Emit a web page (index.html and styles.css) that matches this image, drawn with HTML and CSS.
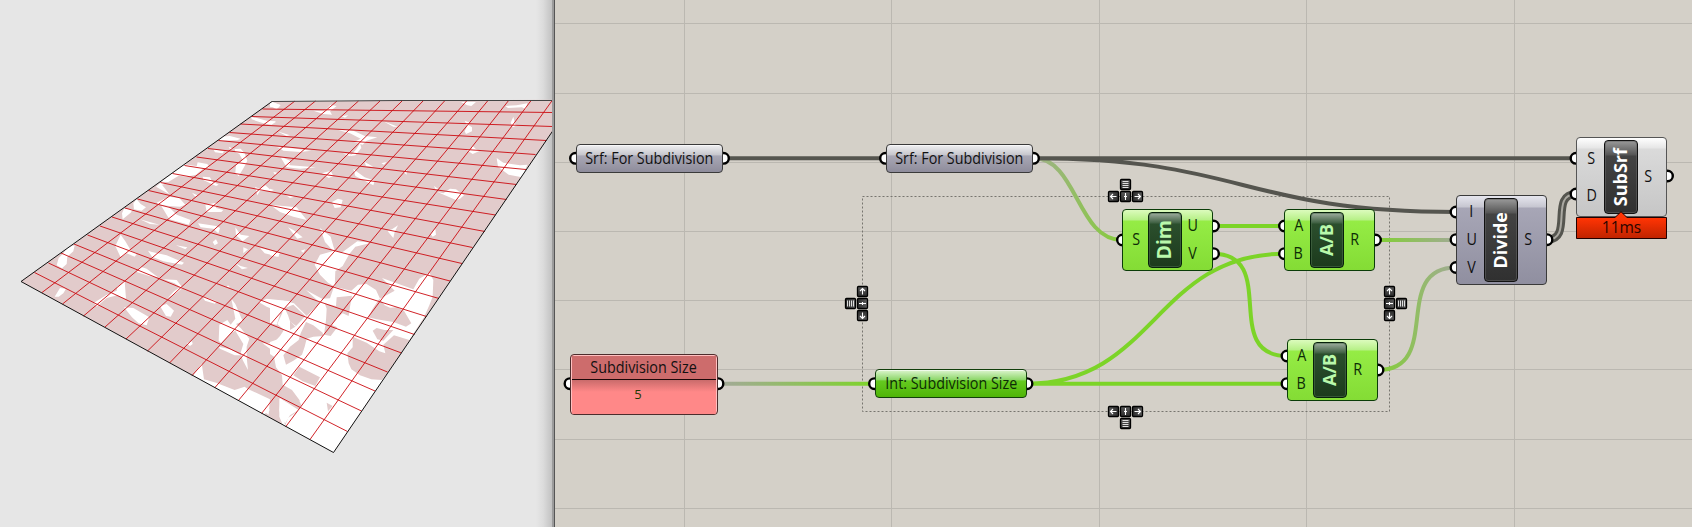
FILE: index.html
```html
<!DOCTYPE html>
<html lang="en">
<head>
<meta charset="utf-8">
<title>Surface subdivision</title>
<link rel="stylesheet" href="styles.css">
</head>
<body>
<main class="workspace">
  <section class="viewport">
    <svg class="mesh" width="552" height="527" viewBox="0 0 552 527">
      <defs><clipPath id="surface"><path d="M21 281.5L272 101.5L552 99.7L574 99.7L333.500 452.500Z"/></clipPath></defs>
      <path class="mesh-fill" d="M21 281.5L272 101.500L574 99.700L333.500 452.500Z"/>
      <g clip-path="url(#surface)">
        <g class="patches" transform="translate(0 80) scale(.33333)">
          <path d="M754 110L800 122L828 124L815 134L790 130L755 118ZM655 170L690 168L722 176L712 181L660 182ZM640 208L672 214L668 220L645 217ZM686 200L700 206L690 208ZM704 207L722 206L734 220L742 242L732 262L716 289L706 278L708 255L728 240L718 222L706 216ZM593 247L622 252L628 262L608 266L590 258ZM552 253L614 262L588 284L560 290L536 287L505 306L484 305L518 279ZM484 306L495 312L486 314L508 343L468 320ZM608 290L630 292L636 304L656 314L648 318L610 300ZM765 320L778 326L796 316L816 334L780 332L772 346ZM576 338L592 346L586 350ZM506 350L538 354L556 374L540 380L508 378L474 374L470 368ZM484 378L506 380L530 404L572 420L566 434L508 418ZM410 358L422 372L438 382L425 392L402 388L400 370ZM372 386L398 388L392 398L368 418L366 400ZM616 374L650 368L648 384L670 390L664 396L620 396ZM594 430L648 438L660 444L655 460L640 446L602 442ZM706 442L722 464L748 468L728 484L708 466ZM420 418L478 434L450 432ZM362 464L376 484L394 514L412 520L404 530L380 520L362 532L346 498ZM528 496L562 502L556 508ZM638 486L648 478L654 490L644 496ZM444 512L456 516L500 526L552 548L546 554L490 544L456 530ZM204 502L224 496L220 514L202 530L200 552L186 565L170 556L176 534L190 520ZM180 624L198 626L190 640L176 650L164 650ZM422 560L440 566L474 592L448 588L410 576ZM490 598L530 600L548 624L528 640L500 656L498 660L522 634L540 622L524 610ZM374 604L378 656L352 646L320 654L290 680L282 668L318 646L350 632L352 620ZM372 682L400 684L448 712L440 736L416 730L396 712ZM480 678L500 672L522 692L512 710L498 708ZM730 502L744 508L730 520ZM706 550L722 558L744 564L726 568ZM780 504L838 518L836 530L794 520ZM684 616L690 622L680 622ZM606 648L650 664L645 671L615 662ZM828 202L870 206V213ZM846 232L870 242V252L860 250ZM820 276L832 278L826 286ZM808 68L818 66L842 76L830 88L822 84ZM560 790L576 784L578 792L570 798Z"/>
          <path d="M694 656L706 672L718 700L728 724L708 732L722 744L748 776L740 800L740 832L744 870L728 840L722 818L730 792L706 752L694 758L664 790L656 782L658 734L682 720L692 734L706 716L702 696ZM656 800L690 808L724 826L704 826L660 806ZM776 666L800 656L870 664V690L854 700L830 692L800 680ZM850 692L870 690V888L846 868L828 846L820 814L788 790L820 790L840 768L852 750L832 732ZM605 850L612 898L648 908L704 930L734 920L760 940L810 990L790 1005L700 955L580 886ZM810 958L806 1004L770 980L730 944L742 926Z"/>
        </g>
        <g class="patches" transform="translate(270 80) scale(.33333)">
          <path d="M0 66L30 74L24 84L0 80ZM130 92L162 94L182 74L200 78L180 94L186 104L160 102ZM215 108L235 106L225 113ZM0 124L18 128L0 132ZM22 154L60 166L50 168ZM205 150L250 152L285 168L322 172L290 182L278 194L252 186L272 176L240 160ZM340 124L384 140L370 140ZM24 202L60 204L124 212L90 216L40 212ZM270 190L274 204L256 226L242 228L260 206ZM32 232L46 238L60 256L138 262L90 266L50 262L44 252ZM218 220L250 224L238 228ZM156 280L182 272L190 288L176 294ZM250 266L262 276L284 292L314 302L310 316L256 288ZM284 246L310 260L288 258ZM334 250L350 246L342 254ZM400 276L410 268L410 284ZM186 366L204 356L218 360L212 382L194 384ZM48 346L74 350L60 354ZM0 374L80 382L110 420L70 410L30 396ZM54 442L70 450L98 472L82 476ZM92 512L106 508L100 518ZM0 514L30 520L22 530L0 526ZM352 452L366 448L384 436L374 456L370 474L358 460ZM482 462L496 446L498 464L488 470ZM573 66L618 66L604 78L592 76ZM706 78L740 76L772 70L768 88L756 82L714 84ZM584 122L600 128L594 134L606 142L606 154L588 162L584 154L592 138ZM722 128L730 110L736 134L742 136L728 142ZM590 210L604 206L608 198L618 208L630 212L608 222ZM680 234L700 248L750 256L772 254L756 292L716 284L684 260ZM492 318L506 328L496 328ZM502 336L520 340L540 326L558 328L582 346L570 356L558 360L530 348ZM0 326L12 330L0 336Z"/>
        </g>
        <g class="patches" transform="translate(270 230) scale(.33333)">
          <path d="M150 -6L182 20L194 62L215 68L262 34L304 38L256 50L238 72L218 108L196 124L194 170L174 158L150 134L134 104L150 74L190 63L165 36ZM0 212L40 212L72 220L96 244L110 258L76 290L60 272L46 240L36 236L20 284L0 280V232L30 230Z"/>
          <path d="M108 180L156 206L180 205L192 170L244 182L264 164L290 162L318 180L330 206L374 182L336 144L430 178L448 146L478 128L490 150L488 200L478 226L462 262L360 420L190 668L40 588L28 560L28 505L60 514L90 512L66 480L38 464L36 436L18 412L12 380L0 372V336L28 326L60 300L76 290L110 258L150 218Z"/>
        </g>
        <g class="mesh-fill" transform="translate(270 230) scale(.33333)">
          <path d="M200 202L246 197L240 230L236 258L218 250L204 262L184 284L202 292L182 318L162 314L168 270L170 236L164 220L198 228ZM328 206L344 226L360 233L380 232L402 242L424 280L408 290L370 276L320 268L294 262L308 236ZM308 302L320 294L344 300L370 300L340 332L322 328ZM248 320L290 338L328 364L346 370L340 344L372 316L418 330L398 374L335 450L304 448L270 436L244 418L236 400L232 370L248 352ZM88 410L150 442L136 468L98 454L70 436ZM108 276L130 286L158 308L160 318L130 320L110 326L104 350L96 374L70 392L48 404L40 376L60 350L86 330L92 310ZM44 234L70 224L106 258L78 288L60 274L54 256ZM170 518L188 528L174 544ZM34 470L60 490L88 512L94 526L80 546L54 564L46 586L36 560Z"/>
        </g>
        <path class="patches" transform="translate(270 230) scale(.33333)" d="M32 506L52 518L86 540L60 556L46 580L34 570L28 540Z"/>
      </g>
      <path class="mesh-lines" d="M42 292.500L295 101M62.500 304L315.500 101M83.500 316L337 101M105 327L358.500 101M126 339L380 101M147.500 351L402 101M169.500 363L423.500 100.500M192 375.500L445 100.500M214.500 388L467 100.500M238 401L488 100.500M261.500 413.500L509 100M285.500 427L531.500 100M310 439.500L552.500 100M34.500 272.500L347.500 431.500M48.500 263L361.500 411M61 253L375 391M74 244L387.500 372M87.500 235L401.500 353M100 226L414.500 334.500M112 217L426.500 316.500M125 208L439 298.500M137.500 199L450 281M148.500 190.500L462 263.500M160.500 182.500L472.500 247.500M172.500 173.500L485 231.500M184.500 165.500L495.500 215M196.500 157L506.500 199.500M208 148.500L516.500 184.500M218.500 140.500L526 169.500M229.500 132.500L535.500 154.500M240.500 124L546.500 140.500M251.500 116.500L552.500 126.500M262.500 109L552.500 112.500"/>
      <path class="mesh-edge" d="M272 101.500L21 281.500L333.500 452.500L574 99.700"/>
      <path class="mesh-edge mesh-edge-top" d="M272 101.500L400 100.500H552"/>
    </svg>
  </section>

  <section class="canvas">
    <svg class="wires" width="1137" height="527" viewBox="555 0 1137 527">
      <defs>
        <linearGradient id="toGreen" gradientUnits="userSpaceOnUse" x1="724" y1="0" x2="870" y2="0"><stop offset="0" stop-color="#a2aa96"/><stop offset="1" stop-color="#7ed32c"/></linearGradient>
        <linearGradient id="dimIn" gradientUnits="userSpaceOnUse" x1="1035" y1="0" x2="1120" y2="0"><stop offset="0" stop-color="#9fb188"/><stop offset="1" stop-color="#86cb3d"/></linearGradient>
        <linearGradient id="uOut" gradientUnits="userSpaceOnUse" x1="1378" y1="0" x2="1455" y2="0"><stop offset="0" stop-color="#82cf35"/><stop offset="1" stop-color="#a1ab94"/></linearGradient>
        <linearGradient id="key" x1="0" y1="0" x2="0" y2="1"><stop offset="0" stop-color="#5c5c5c"/><stop offset="1" stop-color="#2b2b2b"/></linearGradient>
        <g id="box"><rect x="-5" y="-5" width="10" height="10" rx="1" fill="url(#key)" stroke="#000" stroke-width="1.300"/></g>
        <g id="up"><use href="#box"/><path class="glyph" d="M0 3V-3M-2.500 -.5L0 -3L2.500 -.5"/></g>
        <g id="plus"><use href="#box"/><path class="glyph" d="M0 -3.500V3.500"/><path class="glyph" d="M-1.500 0H1.500"/></g>
        <g id="bars"><use href="#box"/><path class="glyph bar" d="M-3 -3H3M-3 -1H3M-3 1H3M-3 3H3"/></g>
        <circle id="port" r="5.300"/>
      </defs>
      <path class="grid-lines" d="M684.500 0V527M891.500 0V527M1099.500 0V527M1306.500 0V527M1514.500 0V527M555 23.500H1692M555 93.500H1692M555 162.500H1692M555 231.500H1692M555 300.500H1692M555 369.500H1692M555 439.500H1692M555 508.500H1692"/>
      <rect class="group-frame" x="862.500" y="196.500" width="527" height="215"/>

      <g class="wire">
        <path d="M1034 158.300C1077 158.300 1077 240 1122 240" stroke="url(#dimIn)"/>
        <path class="dark" d="M724 158.300H886M1034 158.300H1576M1034 158.300C1243 158.300 1243 212 1456 212"/>
        <path d="M718 383.700L875 383.710" stroke="url(#toGreen)"/>
        <path class="green" d="M1027 383.700H1287M1027 383.700C1155 383.700 1155 253.700 1285 253.700M1213 226H1285M1213 253.700C1280 253.700 1220 356 1287 356"/>
        <path d="M1375 240L1456 240.010" stroke="url(#uOut)"/>
        <path d="M1378 370C1444 370 1390 267.500 1456 267.500" stroke="url(#uOut)"/>
        <path class="dark pair" d="M1547 239.700C1574 239.700 1549 194 1576 194"/>
        <path class="pair-gap" d="M1547 239.700C1574 239.700 1549 194 1576 194"/>
      </g>
      <g class="ports">
        <use href="#port" x="575.500" y="158.300"/><use href="#port" x="723.500" y="158.300"/>
        <use href="#port" x="885.500" y="158.300"/><use href="#port" x="1033.500" y="158.300"/>
        <use href="#port" x="570" y="383.700"/><use href="#port" x="718" y="383.700"/>
        <use href="#port" x="874.500" y="383.700"/><use href="#port" x="1027" y="383.700"/>
        <use href="#port" x="1122.500" y="240"/><use href="#port" x="1213.500" y="226"/><use href="#port" x="1213.500" y="253.700"/>
        <use href="#port" x="1284.500" y="226"/><use href="#port" x="1284.500" y="253.700"/><use href="#port" x="1375.500" y="240"/>
        <use href="#port" x="1287" y="356"/><use href="#port" x="1287" y="383.700"/><use href="#port" x="1378" y="370"/>
        <use href="#port" x="1456" y="212"/><use href="#port" x="1456" y="239.700"/><use href="#port" x="1456" y="267.500"/><use href="#port" x="1547" y="239.700"/>
        <use href="#port" x="1576" y="158.300"/><use href="#port" x="1576" y="194"/><use href="#port" x="1667.500" y="176"/>
      </g>
      <g class="handles">
        <use href="#bars" transform="translate(1125.500 184.500)"/><use href="#up" transform="translate(1113.500 196.500) rotate(-90)"/><use href="#plus" transform="translate(1125.500 196.500)"/><use href="#up" transform="translate(1137.500 196.500) rotate(90)"/>
        <use href="#bars" transform="translate(1125.500 423.500)"/><use href="#up" transform="translate(1113.500 411.500) rotate(-90)"/><use href="#plus" transform="translate(1125.500 411.500)"/><use href="#up" transform="translate(1137.500 411.500) rotate(90)"/>
        <use href="#bars" transform="translate(850.500 303.500) rotate(90)"/><use href="#up" transform="translate(862.500 291.500)"/><use href="#plus" transform="translate(862.500 303.500) rotate(90)"/><use href="#up" transform="translate(862.500 315.500) rotate(180)"/>
        <use href="#bars" transform="translate(1401.500 303.500) rotate(90)"/><use href="#up" transform="translate(1389.500 291.500)"/><use href="#plus" transform="translate(1389.500 303.500) rotate(90)"/><use href="#up" transform="translate(1389.500 315.500) rotate(180)"/>
      </g>
    </svg>

    <div class="node param srf-a"><span>Srf: For Subdivision</span></div>
    <div class="node param srf-b"><span>Srf: For Subdivision</span></div>
    <div class="node panel">
      <div class="panel-title"><span>Subdivision Size</span></div>
      <div class="panel-value">5</div>
    </div>
    <div class="node param int"><span>Int: Subdivision Size</span></div>

    <div class="node component selected dim">
      <div class="side"><span>S</span></div>
      <div class="badge"><span>Dim</span></div>
      <div class="side out"><span>U</span><span>V</span></div>
    </div>
    <div class="node component selected ratio-a">
      <div class="side"><span>A</span><span>B</span></div>
      <div class="badge"><span>A/B</span></div>
      <div class="side out"><span>R</span></div>
    </div>
    <div class="node component selected ratio-b">
      <div class="side"><span>A</span><span>B</span></div>
      <div class="badge"><span>A/B</span></div>
      <div class="side out"><span>R</span></div>
    </div>
    <div class="node component divide">
      <div class="side"><span>I</span><span>U</span><span>V</span></div>
      <div class="badge"><span>Divide</span></div>
      <div class="side out"><span>S</span></div>
    </div>
    <div class="node component subsrf">
      <div class="side"><span>S</span><span>D</span></div>
      <div class="badge"><span>SubSrf</span></div>
      <div class="side out"><span>S</span></div>
    </div>
    <div class="timer">
      <svg class="timer-shape" width="92" height="28" viewBox="0 0 92 28">
        <defs><linearGradient id="heat" x1="0" y1="0" x2="0" y2="1"><stop offset=".25" stop-color="#ff3404"/><stop offset="1" stop-color="#bf2300"/></linearGradient></defs>
        <path d="M.5 6.500H39L45 .7L51 6.500H90.500V27.500H.5Z" fill="url(#heat)" stroke="#200"/>
      </svg>
      <span class="timer-text">11ms</span>
    </div>
  </section>
</main>
</body>
</html>
```

FILE: styles.css
```css
body {
  margin: 0;
  font-family: "Open Sans", "Noto Sans", sans-serif;
  font-size: 15.5px;
  color: #111;
}

.workspace {
  display: flex;
  width: 1692px;
  height: 527px;
  overflow: hidden;
}

.viewport {
  position: relative;
  width: 552px;
  flex: none;
  background: linear-gradient(90deg, #e6e6e6 536px, #dcdcdc 543px, #c2c2c2 552px);
}

.mesh { display: block; }
.mesh-fill { fill: #e2cbcb; }
.patches { fill: #fff; }
.mesh-lines { fill: none; stroke: #cc0a10; stroke-width: .9; }
.mesh-edge { fill: none; stroke: #111; stroke-width: 1; }
.mesh-edge-top { stroke: #444; }

.canvas {
  position: relative;
  flex: 1;
  box-sizing: border-box;
  border-left: 1px solid #555;
  box-shadow: -2px 0 0 #9b9b9b;
  margin-left: 2px;
  background: #d4d0c8;
}

.wires { display: block; }
.grid-lines { fill: none; stroke: #bbb8b1; }
.group-frame { fill: none; stroke: #77756f; stroke-dasharray: 2 2; }
.wire path { fill: none; stroke-width: 4; }
.wire .dark { stroke: #55554f; }
.wire .green { stroke: #7cd428; }
.wire .pair { stroke-width: 8; }
.wire .pair-gap { stroke: #aaa8a1; stroke-width: 2; }
.ports { fill: #fff; stroke: #000; stroke-width: 2.4; }
.glyph { fill: none; stroke: #fff; stroke-width: 1.1; }
.bar { stroke: #ddd; stroke-width: 1; }

.node {
  position: absolute;
  box-sizing: border-box;
  border: 1px solid #3a3a3a;
  border-radius: 4px;
}

.param {
  display: flex;
  align-items: center;
  justify-content: center;
  height: 29px;
  background: linear-gradient(#f0f0f2, #c6c6cc 37%, #a9a8b5 40%, #8e8c9b);
  box-shadow: inset 0 1px 0 #fff9;
  line-height: 20px;
  white-space: nowrap;
}
.param span { transform: translateY(-1.500px) scaleX(.925); }
.srf-a { left: 21px; top: 144px; width: 147px; }
.srf-b { left: 331px; top: 144px; width: 147px; }
.int {
  left: 320px;
  top: 369px;
  width: 152px;
  border-color: #123f0c;
  background: linear-gradient(#ddf5cf, #8bd667 37%, #65ca20 40%, #4fb508);
  color: #0d2c06;
}

.panel {
  left: 15px;
  top: 354px;
  width: 148px;
  height: 61px;
  overflow: hidden;
  border-color: #4d2d2d;
  background: #ff8888;
  box-shadow: inset 0 0 0 1px #ffc0c0;
}
.panel-title {
  display: flex;
  align-items: center;
  justify-content: center;
  height: 23px;
  margin: 1px 1px 0;
  border-bottom: 1px solid #1c0707;
  background: #cd6c6c;
  line-height: 20px;
}
.panel-title span { transform: translateY(-1.500px) scaleX(.925); }
.panel-value {
  height: 34px;
  margin: 0 1px;
  padding-right: 12px;
  background: linear-gradient(#c96b6b, #ff8888 12px);
  color: #1f3a05;
  font-size: 13px;
  line-height: 29px;
  text-align: center;
}

.component {
  display: flex;
  width: 91px;
  padding: 2px 0;
  line-height: 20px;
}
.side {
  display: flex;
  flex-direction: column;
  justify-content: space-around;
  align-items: center;
  width: 24px;
  padding-left: 2px;
}
.out { width: 21px; padding-left: 0; }
.side span { transform: translateY(-1.500px) scaleX(.925); }

.badge {
  display: flex;
  align-items: center;
  justify-content: center;
  flex: none;
  box-sizing: border-box;
  width: 34px;
  border: 1px solid #111;
  border-radius: 4px;
  background: linear-gradient(#999, #555 14px, #434343 15px, #303030);
  box-shadow: inset 0 0 0 1px #6668;
  color: #fff;
  font-size: 18px;
  font-weight: 700;
}
.badge span { writing-mode: vertical-rl; transform: rotate(180deg); line-height: 24px; margin-right: 2px; }

.selected {
  height: 62px;
  border-color: #0a3c08;
  background: linear-gradient(#dcfbbd, #b6f086 10px, #95ec45 11px, #84dc35);
  color: #0d2c06;
}
.selected .side { width: 23px; }
.selected .out { width: 22px; }
.selected .badge {
  border-color: #06200a;
  background: linear-gradient(#9fae9f, #3f6042 10px, #2b4f2d 11px, #1c3a1c);
  box-shadow: inset 0 0 0 1px #4f6f4f88;
  color: #b9f9ab;
}
.dim { left: 567px; top: 209px; }
.dim .badge { font-size: 19.5px; }
.ratio-a { left: 729px; top: 209px; }
.ratio-b { left: 732px; top: 339px; }
.divide {
  left: 901px;
  top: 195px;
  height: 90px;
  background: linear-gradient(#e6e6ee, #c6c6d0 11px, #a7a6b6 12px, #908fa0);
}
.divide .side, .subsrf .side { width: 25px; }
.divide .out, .subsrf .out { width: 20px; }
.subsrf {
  left: 1021px;
  top: 137px;
  height: 80px;
  border-color: #555;
  background: linear-gradient(#fff, #e6e6e6 10px, #dadada 11px, #c6c6c6);
}

.timer { position: absolute; left: 1021px; top: 211px; width: 92px; height: 28px; }
.timer-shape { display: block; }
.timer-text {
  position: absolute;
  inset: 6px 1px 0 0;
  color: #2a0500;
  line-height: 20px;
  text-align: center;
}
```
